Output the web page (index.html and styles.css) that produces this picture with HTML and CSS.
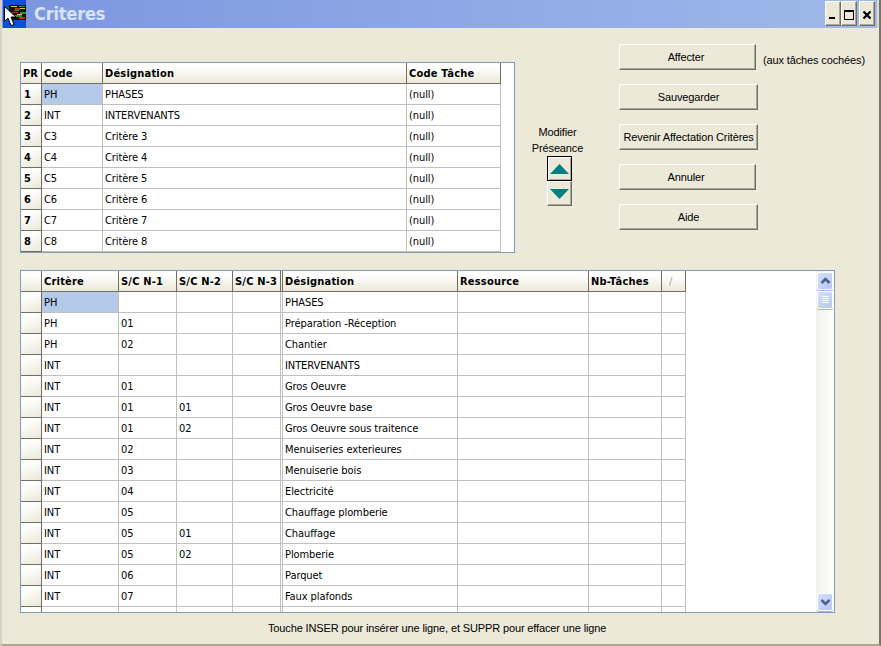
FILE: index.html
```
<!DOCTYPE html>
<html lang="fr">
<head>
<meta charset="utf-8">
<title>Criteres</title>
<link rel="stylesheet" href="styles.css">
</head>
<body>
<div class="window">
  <header class="titlebar">
    <svg class="app-icon" width="23" height="28" viewBox="0 0 23 28" shape-rendering="crispEdges">
      <rect width="23" height="28" fill="#0b50dc"/>
      <rect x="6" y="5" width="17" height="15" fill="#101008"/>
      <path d="M8 6h6v1H8zM17 8h5v1h-5zM14 14h5v1h-5z" fill="#e5c52a"/>
      <path d="M12 8h5v2h-5zM9 12h6v1H9zM16 17h6v2h-6z" fill="#d02424"/>
      <path d="M16 6h6v1h-6zM11 10h5v1h-5zM17 12h6v2h-6zM11 15h8v2h-8z" fill="#24963b"/>
      <path d="M1.500 6.500v15l3.500-3.500 3 7.500 3-1-3-7.500h5z" fill="#fff" stroke="#000" shape-rendering="auto"/>
    </svg>
    <h1 class="title">Criteres</h1>
    <div class="controls">
      <button class="ctl"><svg width="14" height="22"><path d="M3 14h6v2H3z"/></svg></button>
      <button class="ctl"><svg width="14" height="22"><path d="M2 7h10v10H2zM3 9v7h8V9z" fill-rule="evenodd"/></svg></button>
      <button class="ctl close"><svg width="14" height="22"><path d="M3.500 8.500l7 7M10.500 8.500l-7 7" stroke="#000" stroke-width="2.200"/></svg></button>
    </div>
  </header>
  <main class="content">
    <section class="top">
      <div class="grid-box criteria"><div class="table" id="criteria"></div></div>
      <div class="order">
        <span>Modifier</span><span>Préseance</span>
        <button class="arrow active"><svg width="19" height="10"><path d="M0 10L9.500 0 19 10z"/></svg></button>
        <button class="arrow"><svg width="19" height="10"><path d="M0 0L9.500 10 19 0z"/></svg></button>
      </div>
      <div class="actions">
        <div class="action-row"><button class="btn short">Affecter</button><span class="note">(aux tâches cochées)</span></div>
        <button class="btn">Sauvegarder</button>
        <button class="btn">Revenir Affectation Critères</button>
        <button class="btn short">Annuler</button>
        <button class="btn">Aide</button>
      </div>
    </section>
    <section class="grid-box details">
      <div class="table" id="details"></div>
      <div class="scrollbar">
        <div class="sb-btn"><svg width="16" height="18"><path d="M4.500 11l4-4 4 4"/></svg></div>
        <div class="sb-btn thumb"><svg width="16" height="18"><path d="M5 5.500h7M5 7.500h7M5 9.500h7M5 11.500h7"/></svg></div>
        <div class="sb-btn last"><svg width="16" height="18"><path d="M4.500 7l4 4 4-4"/></svg></div>
      </div>
    </section>
    <p class="hint">Touche INSER pour insérer une ligne, et SUPPR pour effacer une ligne</p>
  </main>
</div>
<script src="grid.js"></script>
</body>
</html>
```
FILE: styles.css
```
* { box-sizing: border-box; }
body { margin: 0; background: #ece9d8; color: #000; font: 11px/14px "Liberation Sans", Arial, sans-serif; letter-spacing: -.13px; }
button { padding: 0; margin: 0; font: inherit; letter-spacing: inherit; color: inherit; }
svg { display: block; }
.window { width: 881px; height: 646px; overflow: hidden; background: #ece9d8; border-left: 2px solid #d4d2c8; border-right: 2px solid #77756c; border-bottom: 2px solid #aaa794; }
.titlebar { display: flex; height: 28px; padding-left: 1px; background: linear-gradient(90deg, #7b96df, #9fb9ea); border-right: 2px solid #dedbcb; }
.title { margin: 0 0 0 8px; font: bold 18px/27px "DejaVu Sans Condensed", "DejaVu Sans", sans-serif; letter-spacing: -.2px; color: #d8e4f8; }
.controls { display: flex; margin: 0 2px 0 auto; padding-top: 1px; }
.ctl { width: 16px; height: 25px; background: #ece9d8; border: 1px solid; border-color: #fff #716f64 #716f64 #fff; box-shadow: inset -1px -1px #aca899; }
.close { margin-left: 2px; }
.content { padding: 15px 0 0 18px; }
.top { display: flex; height: 227px; }
.grid-box { background: #fff; border: 1px solid #7f9db9; overflow: hidden; }
.criteria { width: 495px; height: 191px; margin-top: 19px; flex: none; }
.details { display: flex; width: 815px; height: 343px; }
.table { flex: none; font: 11px/22px "DejaVu Sans Condensed", "DejaVu Sans", sans-serif; }
.row { display: grid; height: 21px; }
#criteria .row { grid-template-columns: 21px 61px 304px 94px; width: 480px; }
#details .row { grid-template-columns: 21px 77px 58px 56px 48px 2px 175px 131px 73px 24px; width: 665px; }
.cell { height: 21px; padding-left: 2px; border-right: 1px solid #c0c0c0; border-bottom: 1px solid #c0c0c0; white-space: nowrap; overflow: hidden; letter-spacing: -.08px; }
.cell.head { font-weight: bold; background: linear-gradient(#fff 20%, #ece9d8); border-color: #716f64; letter-spacing: .2px; }
.cell.head:first-child { letter-spacing: -.1px; }
.cell.rowhead { font-weight: bold; padding-left: 3px; background: linear-gradient(160deg, #fff 20%, #ebe8d8); border-color: #716f64; }
.cell.selected { background: #b5c9e8; }
.cell.gap { padding: 0; }
.cell.sort { color: #aca899; font-weight: normal; padding-left: 7px; }
.order { display: flex; flex-direction: column; align-items: center; width: 84px; padding-top: 81px; line-height: 16px; }
.order span { margin-left: 1px; }
.arrow { display: flex; align-items: center; justify-content: center; width: 25px; height: 25px; margin-left: 4px; background: #ece9d8; border: 1px solid; border-color: #fff #716f64 #716f64 #fff; box-shadow: inset -1px -1px #aca899; fill: #008080; }
.arrow.active { border-color: #000; box-shadow: inset 1px 1px #fff, inset -1px -1px #aca899; }
.actions { display: flex; flex-direction: column; gap: 14px; margin-left: 20px; padding-top: 1px; }
.action-row { display: flex; gap: 7px; }
.note { padding-top: 9px; white-space: nowrap; }
.btn { width: 139px; height: 26px; background: #ece9d8; border: 1px solid; border-color: #fff #716f64 #716f64 #fff; box-shadow: inset -1px -1px #aca899; white-space: nowrap; }
.btn.short { width: 137px; padding-right: 3px; }
.scrollbar { display: flex; flex-direction: column; width: 18px; margin-left: auto; padding: 1px 1px 0; background: linear-gradient(90deg, #f2f1ec, #fefefb); }
.sb-btn { width: 16px; height: 18px; margin-bottom: 1px; background: linear-gradient(135deg, #d5e0fd, #b5c7f6); border: 1px solid #fff; border-radius: 2px; box-shadow: 0 1px #9db6e0; }
.sb-btn svg { margin: -1px; fill: none; stroke: #4d6185; stroke-width: 2.500; }
.sb-btn.thumb svg { stroke: #f5f9ff; stroke-width: 1; }
.last { margin-top: auto; }
.hint { margin: 8px 0 0 248px; }
```
FILE: grid.js
```
const criteria = [
  ["PR", "Code", "Désignation", "Code Tâche"],
  ["1", "PH", "PHASES", "(null)"], ["2", "INT", "INTERVENANTS", "(null)"],
  ...[3, 4, 5, 6, 7, 8].map(n => [String(n), "C" + n, "Critère " + n, "(null)"])
];
const entries = [
  ["PH", "", "", "PHASES"], ["PH", "01", "", "Préparation -Réception"],
  ["PH", "02", "", "Chantier"], ["INT", "", "", "INTERVENANTS"],
  ["INT", "01", "", "Gros Oeuvre"], ["INT", "01", "01", "Gros Oeuvre base"],
  ["INT", "01", "02", "Gros Oeuvre sous traitence"], ["INT", "02", "", "Menuiseries exterieures"],
  ["INT", "03", "", "Menuiserie bois"], ["INT", "04", "", "Electricité"],
  ["INT", "05", "", "Chauffage plomberie"], ["INT", "05", "01", "Chauffage"],
  ["INT", "05", "02", "Plomberie"], ["INT", "06", "", "Parquet"],
  ["INT", "07", "", "Faux plafonds"], ["", "", "", ""]
];
const details = [
  ["", "Critère", "S/C N-1", "S/C N-2", "S/C N-3", "", "Désignation", "Ressource", "Nb-Tâches", "/"],
  ...entries.map(e => ["", e[0], e[1], e[2], "", "", e[3], "", "", ""])
];
function render(id, rows) {
  const table = document.getElementById(id);
  rows.forEach((values, r) => {
    const row = document.createElement("div");
    row.className = "row";
    values.forEach((value, c) => {
      const cell = document.createElement("div");
      cell.className = "cell";
      if (r === 0) cell.classList.add("head");
      else if (c === 0) cell.classList.add("rowhead");
      if (r === 1 && c === 1) cell.classList.add("selected");
      if (id === "details" && c === 5) cell.classList.add("gap");
      if (r === 0 && c === 9) cell.classList.add("sort");
      const text = document.createElement("span");
      text.textContent = value;
      cell.append(text);
      row.append(cell);
    });
    table.append(row);
  });
}
render("criteria", criteria);
render("details", details);
```
